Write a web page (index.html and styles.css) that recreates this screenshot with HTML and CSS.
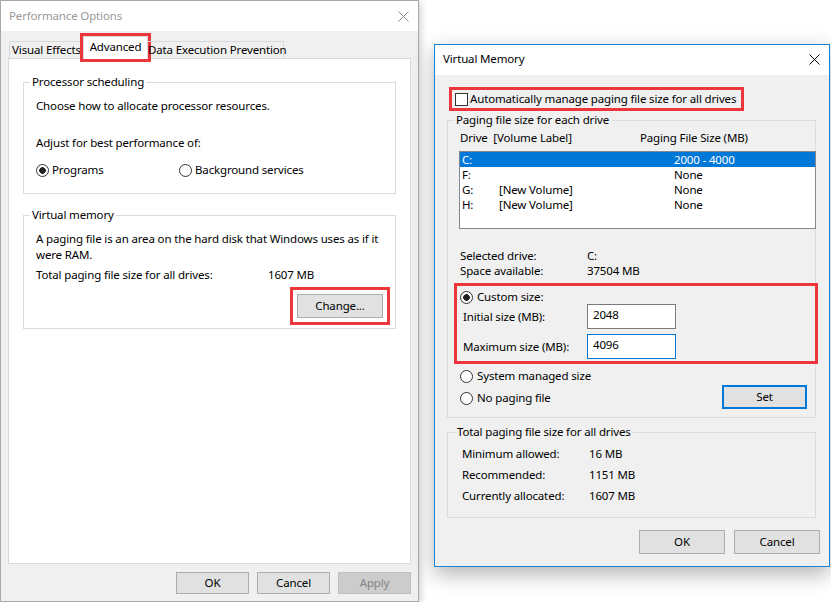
FILE: index.html
```html
<!DOCTYPE html>
<html lang="en">

<head>
    <meta charset="UTF-8">
    <title>Performance Options - Virtual Memory</title>
    <link rel="stylesheet" href="styles.css">
</head>

<body>
    <div class="desktop">
        <!-- Performance Options -->
        <div class="window perf">
            <div class="titlebar">
                <span class="title">Performance Options</span>
                <svg class="close" width="11" height="11" viewBox="0 0 11 11">
                    <path d="M0.5 0.5 L10.5 10.5 M10.5 0.5 L0.5 10.5" stroke="#8c8c8c" stroke-width="1" fill="none"/>
                </svg>
            </div>
            <div class="tabs">
                <div class="tab tab-ve">Visual Effects</div>
                <div class="tab tab-adv active marked">Advanced</div>
                <div class="tab tab-dep">Data Execution Prevention</div>
            </div>
            <div class="panel">
                <fieldset class="group group-proc">
                    <legend>Processor scheduling</legend>
                    <p class="line first">Choose how to allocate processor resources.</p>
                    <p class="line adjust">Adjust for best performance of:</p>
                    <div class="radio-row">
                        <label class="radio radio-prog"><span class="dot checked"></span>Programs</label>
                        <label class="radio"><span class="dot"></span>Background services</label>
                    </div>
                </fieldset>
                <fieldset class="group group-vm">
                    <legend>Virtual memory</legend>
                    <p class="line first">A paging file is an area on the hard disk that Windows uses as if it<br>were RAM.</p>
                    <div class="kv total">
                        <span class="key">Total paging file size for all drives:</span>
                        <span>1607 MB</span>
                    </div>
                    <div class="change-row">
                        <button class="btn btn-change marked">Change...</button>
                    </div>
                </fieldset>
            </div>
            <div class="footer">
                <button class="btn btn-small">OK</button>
                <button class="btn btn-small">Cancel</button>
                <button class="btn btn-small" disabled>Apply</button>
            </div>
        </div>

        <!-- Virtual Memory -->
        <div class="window vm">
            <div class="titlebar">
                <span class="title">Virtual Memory</span>
                <svg class="close" width="11" height="11" viewBox="0 0 11 11">
                    <path d="M0.5 0.5 L10.5 10.5 M10.5 0.5 L0.5 10.5" stroke="#000" stroke-width="1" fill="none"/>
                </svg>
            </div>
            <div class="vm-body">
                <label class="check-row marked"><span class="box"></span>Automatically manage paging file size for all drives</label>

                <fieldset class="group group-drives">
                    <legend>Paging file size for each drive</legend>
                    <div class="list-head">
                        <span class="col-drive">Drive&nbsp; [Volume Label]</span>
                        <span>Paging File Size (MB)</span>
                    </div>
                    <div class="listbox">
                        <div class="row selected"><span class="c1">C:</span><span class="c2"></span><span>2000 - 4000</span></div>
                        <div class="row"><span class="c1">F:</span><span class="c2"></span><span>None</span></div>
                        <div class="row"><span class="c1">G:</span><span class="c2">[New Volume]</span><span>None</span></div>
                        <div class="row"><span class="c1">H:</span><span class="c2">[New Volume]</span><span>None</span></div>
                    </div>

                    <div class="info">
                        <div class="kv"><span class="key">Selected drive:</span><span>C:</span></div>
                        <div class="kv"><span class="key">Space available:</span><span>37504 MB</span></div>
                    </div>

                    <div class="custom marked">
                        <label class="radio"><span class="dot checked"></span>Custom size:</label>
                        <div class="size-row first">
                            <span class="size-label">Initial size (MB):</span>
                            <span class="field">2048</span>
                        </div>
                        <div class="size-row">
                            <span class="size-label">Maximum size (MB):</span>
                            <span class="field focused">4096</span>
                        </div>
                    </div>

                    <label class="radio system"><span class="dot"></span>System managed size</label>
                    <div class="set-row">
                        <label class="radio"><span class="dot"></span>No paging file</label>
                        <button class="btn btn-set">Set</button>
                    </div>
                </fieldset>

                <fieldset class="group group-total">
                    <legend>Total paging file size for all drives</legend>
                    <div class="kv"><span class="key">Minimum allowed:</span><span>16 MB</span></div>
                    <div class="kv"><span class="key">Recommended:</span><span>1151 MB</span></div>
                    <div class="kv"><span class="key">Currently allocated:</span><span>1607 MB</span></div>
                </fieldset>

                <div class="vm-footer">
                    <button class="btn">OK</button>
                    <button class="btn">Cancel</button>
                </div>
            </div>
        </div>
    </div>
</body>

</html>
```

FILE: styles.css
```css
body {
    margin: 0;
    background: #fff;
    font-family: "Noto Sans", "Segoe UI", sans-serif;
    font-size: 11.5px;
    letter-spacing: -0.15px;
    line-height: 16px;
    color: #000;
}

.desktop {
    display: flex;
    align-items: flex-start;
}

.window {
    box-sizing: border-box;
    background: #f0f0f0;
    display: flex;
    flex-direction: column;
}

.perf {
    width: 419px;
    height: 602px;
    border: 1px solid #a9a9a9;
    box-shadow: 2px 2px 7px rgba(0, 0, 0, 0.18);
}

.vm {
    width: 396px;
    height: 523px;
    margin: 44px 0 0 15px;
    border: 1px solid #1883d7;
    box-shadow: 0 7px 20px rgba(0, 0, 0, 0.3);
}

.titlebar {
    height: 30px;
    padding: 0 9px 0 8px;
    background: #fff;
    display: flex;
    align-items: center;
    justify-content: space-between;
    flex-shrink: 0;
}

.perf .title {
    color: #999;
}

.vm .titlebar {
    padding-bottom: 2px;
    box-sizing: border-box;
}

/* tabs */
.tabs {
    display: flex;
    align-items: flex-end;
    margin: 5px 0 -1px 8px;
    position: relative;
    z-index: 1;
}

.tab {
    box-sizing: border-box;
    height: 17px;
    margin-bottom: 1px;
    border-top: 1px solid #d9d9d9;
    text-align: center;
    line-height: 15px;
    white-space: nowrap;
}

.tab-ve {
    width: 74px;
    border-left: 1px solid #d9d9d9;
}

.tab-dep {
    width: 136px;
    border-right: 1px solid #d9d9d9;
}

.tab.active {
    width: 65px;
    height: 23px;
    margin-bottom: 0;
    background: #fff;
    border: 1px solid #d9d9d9;
    border-bottom: none;
    line-height: 20px;
}

.panel {
    box-sizing: border-box;
    width: 403px;
    height: 506px;
    margin-left: 7px;
    padding: 15px 14px 0;
    background: #fff;
    border: 1px solid #d9d9d9;
}

.marked {
    outline: 3px solid #ec363b;
}

/* group boxes */
.group {
    margin: 0;
    padding: 0 0 0 12px;
    min-width: 0;
    border: 1px solid #dcdcdc;
}

.group legend {
    padding: 0 2px;
    margin-left: -6px;
    line-height: 16px;
}

.line {
    margin: 0;
}

.group-proc .first,
.group-vm .first {
    margin-top: 8px;
    white-space: nowrap;
}

.group-proc {
    padding-bottom: 15px;
}

.adjust {
    margin-top: 21px;
}

.radio-row {
    display: flex;
    margin-top: 11px;
}

.radio {
    display: flex;
    align-items: center;
    height: 16px;
    white-space: nowrap;
}

.radio-prog {
    width: 143px;
}

.dot {
    box-sizing: border-box;
    width: 13px;
    height: 13px;
    margin-right: 3px;
    border: 1px solid #333;
    border-radius: 50%;
    background: #fff;
}

.dot.checked {
    background: radial-gradient(circle, #222 0 3px, #fff 3.6px);
}

.group-vm {
    margin-top: 13px;
    padding-bottom: 10px;
}

.kv {
    display: flex;
    white-space: nowrap;
}

.total {
    margin-top: 4px;
}

.total .key {
    width: 232px;
}

.change-row {
    display: flex;
    justify-content: flex-end;
    margin-top: 11px;
    padding-right: 12px;
}

/* buttons */
.btn {
    box-sizing: border-box;
    width: 86px;
    height: 24px;
    padding: 0;
    font: inherit;
    letter-spacing: inherit;
    color: #000;
    background: #e1e1e1;
    border: 1px solid #adadad;
}

.btn-change {
    outline-offset: 4px;
}

.btn-small {
    width: 73px;
    height: 22px;
}

.btn:disabled {
    color: #838383;
    background: #cccccc;
    border-color: #bfbfbf;
}

.footer {
    display: flex;
    justify-content: flex-end;
    gap: 8px;
    margin-top: 8px;
    padding-right: 7px;
}

/* virtual memory dialog */
.vm-body {
    display: flex;
    flex-direction: column;
    padding: 0 13px 0 12px;
}

.check-row {
    display: flex;
    align-items: center;
    align-self: flex-start;
    height: 16px;
    margin: 16px 0 0 6px;
    padding: 0 4px 0 2px;
    outline-offset: 1px;
    white-space: nowrap;
}

.box {
    box-sizing: border-box;
    width: 13px;
    height: 13px;
    margin-right: 2px;
    border: 1px solid #333;
    background: #fff;
}

.group-drives {
    margin-top: 5px;
    padding-bottom: 8px;
}

.list-head {
    display: flex;
    margin-top: 2px;
    white-space: nowrap;
}

.col-drive {
    width: 180px;
}

.listbox {
    box-sizing: border-box;
    height: 78px;
    margin: 5px -1px 0 -1px;
    background: #fff;
    border: 1px solid #828790;
}

.row {
    display: flex;
    height: 15px;
    line-height: 15px;
    padding-left: 2px;
    white-space: nowrap;
}

.row.selected {
    background: #0078d7;
    color: #fff;
}

.c1 {
    width: 37px;
}

.c2 {
    width: 175px;
}

.info {
    margin-top: 19px;
    line-height: 15px;
}

.info .key {
    width: 127px;
}

.custom {
    align-self: flex-start;
    margin: 8px 0 0 -3px;
    padding: 3px 8px 2px 3px;
}

.custom .radio .dot,
.system .dot,
.set-row .dot {
    margin-right: 4px;
}

.size-row {
    display: flex;
    align-items: center;
    margin-top: 5px;
    padding-left: 3px;
}

.size-row.first {
    margin-top: -1px;
}

.size-label {
    width: 124px;
}

.field {
    box-sizing: border-box;
    width: 89px;
    height: 25px;
    padding: 2px 5px 0;
    background: #fff;
    border: 1px solid #7a7a7a;
    align-self: flex-start;
}

.field.focused {
    border-color: #0078d7;
}

.system {
    margin-top: 7px;
}

.set-row {
    display: flex;
    align-items: center;
    justify-content: space-between;
    margin-top: 1px;
    padding-right: 8px;
}

.set-row .radio {
    padding-top: 2px;
}

.btn-set {
    width: 85px;
    border: 2px solid #0078d7;
}

.group-total {
    margin-top: 6px;
    padding: 3px 0 11px 14px;
}

.group-total legend {
    margin-left: -7px;
}

.group-total .kv {
    line-height: 21px;
}

.group-total .key {
    width: 127px;
}

.vm-footer {
    display: flex;
    justify-content: flex-end;
    gap: 9px;
    margin: 12px -4px 0 0;
}
```
